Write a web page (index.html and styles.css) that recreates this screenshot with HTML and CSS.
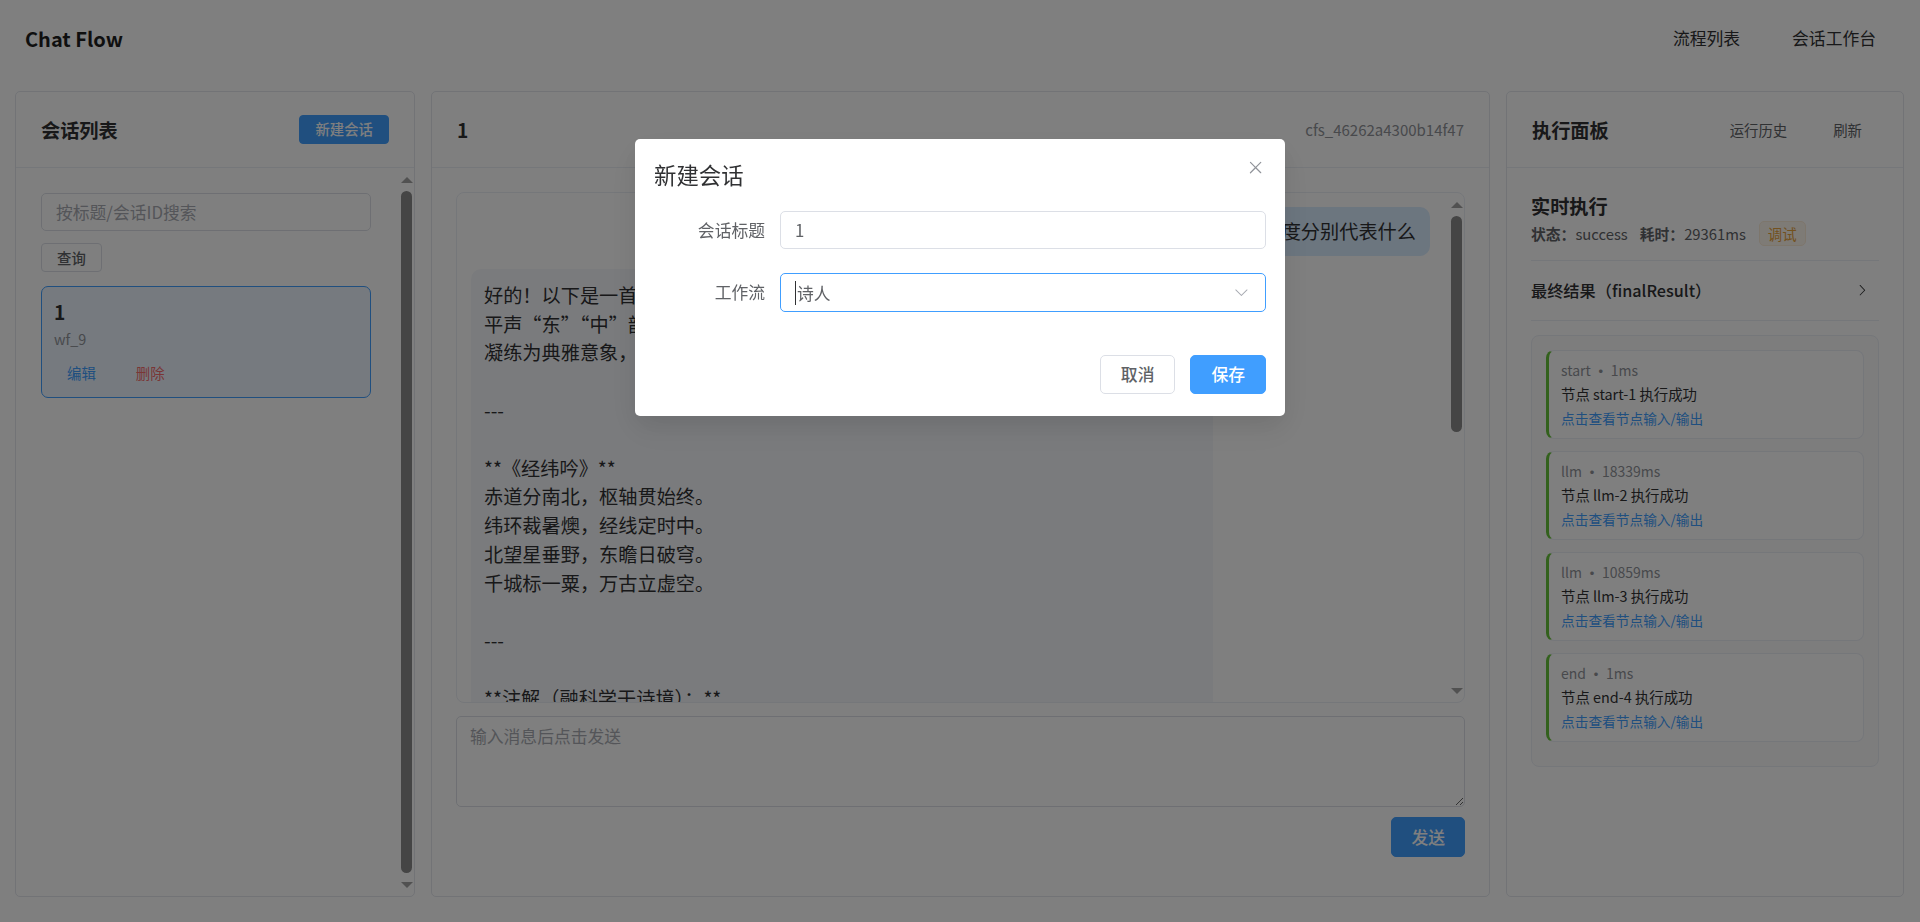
FILE: index.html
```html
<!DOCTYPE html>
<html lang="zh-CN">
<head>
    <meta charset="UTF-8">
    <meta name="viewport" content="width=device-width, initial-scale=1.0">
    <title>Chat Flow - 会话工作台</title>
    <link rel="stylesheet" href="styles.css">
</head>
<body>
    <header class="topbar">
        <div class="brand">Chat Flow</div>
        <nav class="nav">
            <a class="nav-item" href="#">流程列表</a>
            <a class="nav-item" href="#">会话工作台</a>
        </nav>
    </header>

    <main class="workspace">
        <!-- 会话列表 -->
        <section class="panel">
            <div class="panel-header">
                <span class="panel-title">会话列表</span>
                <button class="btn btn-primary btn-small">新建会话</button>
            </div>
            <div class="panel-body scroll-wrap">
                <div class="session-scroll">
                    <input class="input" type="text" placeholder="按标题/会话ID搜索">
                    <button class="btn btn-small btn-query">查询</button>
                    <div class="session-item active">
                        <div class="session-title">1</div>
                        <div class="session-sub">wf_9</div>
                        <div class="session-actions">
                            <button class="btn-text primary">编辑</button>
                            <button class="btn-text danger">删除</button>
                        </div>
                    </div>
                </div>
                <div class="scrollbar">
                    <div class="sb-btn up"><span class="arrow-up"></span></div>
                    <div class="sb-track"><div class="sb-thumb sb-thumb-full"></div></div>
                    <div class="sb-btn down"><span class="arrow-down"></span></div>
                </div>
            </div>
        </section>

        <!-- 会话窗口 -->
        <section class="panel">
            <div class="panel-header">
                <span class="panel-title">1</span>
                <span class="session-id">cfs_46262a4300b14f47</span>
            </div>
            <div class="panel-body chat-body">
                <div class="chat-box">
                    <div class="chat-scroll">
                        <div class="msg user">
                            <div class="bubble">请写一首关于经纬度的诗，并解释纬度和经度分别代表什么</div>
                        </div>
                        <div class="msg assistant">
                            <div class="bubble">好的！以下是一首以经纬度为主题的五言律诗，全诗押上
平声“东”“中”韵，把赤道、子午线、南北纬度与东西经度
凝练为典雅意象，兼顾科学知识与古典诗意。

---

**《经纬吟》**
赤道分南北，枢轴贯始终。
纬环裁暑燠，经线定时中。
北望星垂野，东瞻日破穹。
千城标一粟，万古立虚空。

---

**注解（融科学于诗境）：**
1. **赤道分南北**：赤道是纬度的起点（0°），分出南北半球。
2. **枢轴贯始终**：地轴贯穿南北两极，所有经线汇于两极。
3. **纬环裁暑燠**：纬线是平行于赤道的圆环，决定冷暖分布。
4. **经线定时中**：经度每相差15°，地方时便相差1小时。

希望这首诗能帮助你理解纬度和经度的含义！</div>
                        </div>
                    </div>
                    <div class="scrollbar">
                        <div class="sb-btn up"><span class="arrow-up"></span></div>
                        <div class="sb-track"><div class="sb-thumb sb-thumb-chat"></div></div>
                        <div class="sb-btn down"><span class="arrow-down"></span></div>
                    </div>
                </div>
                <textarea class="chat-input" placeholder="输入消息后点击发送"></textarea>
                <div class="chat-actions">
                    <button class="btn btn-primary btn-send">发送</button>
                </div>
            </div>
        </section>

        <!-- 执行面板 -->
        <section class="panel">
            <div class="panel-header">
                <span class="panel-title">执行面板</span>
                <div class="header-links">
                    <button class="btn-link">运行历史</button>
                    <button class="btn-link">刷新</button>
                </div>
            </div>
            <div class="panel-body exec-body">
                <div class="exec-title">实时执行</div>
                <div class="exec-meta">
                    <span class="meta-item"><b>状态：</b>success</span>
                    <span class="meta-item"><b>耗时：</b>29361ms</span>
                    <span class="tag tag-warning">调试</span>
                </div>

                <div class="collapse">
                    <div class="collapse-head">
                        <span>最终结果（finalResult）</span>
                        <svg class="collapse-arrow" viewBox="0 0 1024 1024"><path d="M340.864 149.312a30.592 30.592 0 0 0 0 42.752L652.736 512 340.864 831.872a30.592 30.592 0 0 0 0 42.752 29.12 29.12 0 0 0 41.728 0L714.24 534.336a32 32 0 0 0 0-44.672L382.592 149.376a29.12 29.12 0 0 0-41.728 0z"/></svg>
                    </div>
                </div>

                <div class="steps">
                    <div class="step">
                        <div class="step-meta">start<span class="dot">·</span>1ms</div>
                        <div class="step-title">节点 start-1 执行成功</div>
                        <a class="step-link" href="#">点击查看节点输入/输出</a>
                    </div>
                    <div class="step">
                        <div class="step-meta">llm<span class="dot">·</span>18339ms</div>
                        <div class="step-title">节点 llm-2 执行成功</div>
                        <a class="step-link" href="#">点击查看节点输入/输出</a>
                    </div>
                    <div class="step">
                        <div class="step-meta">llm<span class="dot">·</span>10859ms</div>
                        <div class="step-title">节点 llm-3 执行成功</div>
                        <a class="step-link" href="#">点击查看节点输入/输出</a>
                    </div>
                    <div class="step">
                        <div class="step-meta">end<span class="dot">·</span>1ms</div>
                        <div class="step-title">节点 end-4 执行成功</div>
                        <a class="step-link" href="#">点击查看节点输入/输出</a>
                    </div>
                </div>
            </div>
        </section>
    </main>

    <!-- 新建会话弹窗 -->
    <div class="overlay">
        <div class="dialog">
            <div class="dialog-header">
                <span class="dialog-title">新建会话</span>
                <button class="dialog-close">
                    <svg viewBox="0 0 1024 1024"><path d="M764.288 214.592 512 466.88 259.712 214.592a31.936 31.936 0 0 0-45.12 45.12L466.752 512 214.528 764.224a31.936 31.936 0 1 0 45.12 45.184L512 557.184l252.288 252.288a31.936 31.936 0 0 0 45.12-45.12L557.12 512.064l252.288-252.352a31.936 31.936 0 1 0-45.12-45.184z"/></svg>
                </button>
            </div>
            <div class="dialog-body">
                <div class="form-item">
                    <label class="form-label">会话标题</label>
                    <input class="field" type="text" value="1">
                </div>
                <div class="form-item">
                    <label class="form-label">工作流</label>
                    <div class="field select focus">
                        <span class="caret"></span><span>诗人</span>
                        <svg class="select-arrow" viewBox="0 0 1024 1024"><path d="M831.872 340.864 512 652.672 192.128 340.864a30.592 30.592 0 0 0-42.752 0 29.12 29.12 0 0 0 0 41.6L489.664 714.24a32 32 0 0 0 44.672 0l340.288-331.712a29.12 29.12 0 0 0 0-41.728 30.592 30.592 0 0 0-42.752 0z"/></svg>
                    </div>
                </div>
            </div>
            <div class="dialog-footer">
                <button class="btn btn-dialog">取消</button>
                <button class="btn btn-primary btn-dialog">保存</button>
            </div>
        </div>
    </div>
</body>
</html>
```

FILE: styles.css
```css
* {
    box-sizing: border-box;
}
html, body {
    height: 100%;
}
body {
    margin: 0;
    font-family: "Noto Sans CJK SC", "Noto Sans", sans-serif;
    font-size: 16.8px;
    color: #303133;
    background: #fff;
    overflow: hidden;
}
button, input, textarea {
    font-family: inherit;
    font-size: inherit;
}
a {
    text-decoration: none;
    color: inherit;
}

/* 顶部导航 */
.topbar {
    height: 77px;
    display: flex;
    align-items: center;
    justify-content: space-between;
    padding: 0 18px 0 25px;
}
.brand {
    font-size: 20px;
    font-weight: 700;
    color: #1f1f1f;
}
.nav {
    display: flex;
}
.nav-item {
    padding: 0 26px;
    line-height: 77px;
    color: #303133;
}

/* 三栏布局 */
.workspace {
    height: calc(100% - 77px);
    display: grid;
    grid-template-columns: 400px 1fr 398px;
    gap: 16px;
    padding: 14px 16px 25px 15px;
}
.panel {
    display: flex;
    flex-direction: column;
    min-height: 0;
    border: 1px solid #e4e7ed;
    border-radius: 5px;
    background: #fff;
    overflow: hidden;
}
.panel-header {
    flex: none;
    height: 76px;
    display: flex;
    align-items: center;
    justify-content: space-between;
    padding: 0 25px;
    border-bottom: 1px solid #ebeef5;
}
.panel-title {
    font-size: 19.2px;
    font-weight: 700;
    color: #303133;
}
.panel-body {
    flex: 1;
    min-height: 0;
}

/* 滚动条 */
.scrollbar {
    flex: none;
    width: 15px;
    display: flex;
    flex-direction: column;
}
.sb-btn {
    flex: none;
    height: 20px;
    display: flex;
    justify-content: center;
}
.sb-btn.up {
    align-items: flex-end;
    padding-bottom: 5px;
}
.sb-btn.down {
    align-items: flex-start;
    padding-top: 6px;
}
.arrow-up {
    border-left: 6px solid transparent;
    border-right: 6px solid transparent;
    border-bottom: 6px solid #a3a3a3;
}
.arrow-down {
    border-left: 6px solid transparent;
    border-right: 6px solid transparent;
    border-top: 6px solid #a3a3a3;
}
.sb-track {
    flex: 1;
    padding: 3px 2px;
}
.sb-thumb {
    background: #8a8a8a;
    border-radius: 6px;
}
.sb-thumb-full {
    height: 100%;
}
.sb-thumb-chat {
    height: 216px;
}

/* 按钮 */
.btn {
    display: inline-flex;
    align-items: center;
    justify-content: center;
    height: 38.4px;
    padding: 0 18px;
    border: 1px solid #dcdfe6;
    border-radius: 5px;
    background: #fff;
    color: #606266;
    font-weight: 500;
    line-height: 1;
    cursor: pointer;
}
.btn-primary {
    background: #409eff;
    border-color: #409eff;
    color: #fff;
}
.btn-small {
    height: 29px;
    padding: 0 15px;
    font-size: 14.4px;
    border-radius: 4px;
}
.btn-text {
    height: 29px;
    padding: 0 13px;
    border: 0;
    background: none;
    font-size: 14.4px;
    cursor: pointer;
}
.btn-text + .btn-text {
    margin-left: 14px;
}
.btn-text.primary {
    color: #409eff;
}
.btn-text.danger {
    color: #f56c6c;
}
.btn-link {
    height: 29px;
    padding: 0 16px;
    border: 0;
    background: none;
    font-size: 14.4px;
    color: #606266;
    cursor: pointer;
}
.btn-link + .btn-link {
    margin-left: 14px;
}
.header-links {
    display: flex;
}

/* 会话列表 */
.scroll-wrap {
    display: flex;
}
.session-scroll {
    flex: 1;
    min-width: 0;
    padding: 25px 28px 0 25px;
    overflow: hidden;
}
.input {
    display: block;
    width: 100%;
    height: 38.4px;
    padding: 0 14px;
    border: 1px solid #dcdfe6;
    border-radius: 5px;
    color: #606266;
    outline: none;
}
.input::placeholder {
    color: #a8abb2;
}
.btn-query {
    margin-top: 12px;
}
.session-item {
    margin-top: 14px;
    padding: 12px 12px 10px;
    border: 1px solid #dcdfe6;
    border-radius: 7px;
}
.session-item.active {
    border-color: #409eff;
    background: #ecf5ff;
}
.session-title {
    font-size: 19.2px;
    font-weight: 700;
    line-height: 27px;
}
.session-sub {
    margin-top: 2px;
    font-size: 14.4px;
    line-height: 21.6px;
    color: #909399;
}
.session-actions {
    margin-top: 8px;
    display: flex;
}

/* 聊天区 */
.session-id {
    font-size: 15px;
    color: #909399;
}
.chat-body {
    display: flex;
    flex-direction: column;
    padding: 24px 24px 39px;
}
.chat-box {
    flex: 1;
    min-height: 0;
    display: flex;
    border: 1px solid #ebeef5;
    border-radius: 8px;
    overflow: hidden;
}
.chat-scroll {
    flex: 1;
    min-width: 0;
    padding: 14px;
    overflow: hidden;
}
.msg {
    display: flex;
}
.msg + .msg {
    margin-top: 13px;
}
.msg.user {
    justify-content: flex-end;
    padding-right: 5px;
}
.bubble {
    font-size: 19.2px;
    line-height: 28.8px;
    white-space: pre-wrap;
    border-radius: 10px;
    color: #303133;
}
.msg.user .bubble {
    max-width: 77%;
    padding: 10px 14px;
    background: #d9ecff;
}
.msg.assistant .bubble {
    width: 77%;
    padding: 12px 13px;
    background: #f5f7fa;
}
.chat-input {
    flex: none;
    display: block;
    height: 91px;
    margin-top: 13px;
    padding: 7px 13px;
    border: 1px solid #dcdfe6;
    border-radius: 5px;
    line-height: 1.5;
    color: #606266;
    resize: vertical;
    outline: none;
}
.chat-input::placeholder {
    color: #a8abb2;
}
.chat-actions {
    flex: none;
    display: flex;
    justify-content: flex-end;
    margin-top: 10px;
}
.btn-send {
    height: 40px;
    padding: 0 19px;
}

/* 执行面板 */
.exec-body {
    padding: 24px;
    overflow: hidden;
}
.exec-title {
    font-size: 19.2px;
    font-weight: 700;
    line-height: 28.8px;
}
.exec-meta {
    display: flex;
    align-items: center;
    font-size: 14.8px;
    color: #606266;
}
.meta-item {
    margin-right: 12px;
}
.meta-item + .meta-item {
    margin-right: 13px;
}
.tag {
    display: inline-flex;
    align-items: center;
    height: 25px;
    padding: 0 8px;
    border-radius: 5px;
    font-size: 14.4px;
}
.tag-warning {
    background: #fdf6ec;
    border: 1px solid #faecd8;
    color: #e6a23c;
}
.collapse {
    margin-top: 14px;
    border-top: 1px solid #ebeef5;
    border-bottom: 1px solid #ebeef5;
}
.collapse-head {
    height: 59px;
    display: flex;
    align-items: center;
    font-size: 16.2px;
    font-weight: 500;
    color: #303133;
}
.collapse-arrow {
    width: 14.4px;
    height: 14.4px;
    margin: 0 10px 0 auto;
    fill: #303133;
}
.steps {
    margin-top: 14px;
    padding: 14px 14px 12px;
    border: 1px solid #ebeef5;
    border-radius: 8px;
    background: #fafafa;
}
.step {
    margin-bottom: 12px;
    padding: 8px 12px 8px;
    background: #fff;
    border: 1px solid #ebeef5;
    border-left: 3px solid #67c23a;
    border-radius: 8px;
}
.step-meta {
    font-size: 14px;
    line-height: 22px;
    color: #909399;
}
.step-meta .dot {
    margin: 0 3px;
    font-weight: 700;
}
.step-title {
    font-size: 14.4px;
    line-height: 25px;
    color: #303133;
}
.step-link {
    display: block;
    font-size: 13.7px;
    line-height: 24px;
    color: #409eff;
}

/* 弹窗 */
.overlay {
    position: fixed;
    inset: 0;
    background: rgba(0, 0, 0, 0.5);
}
.dialog {
    position: relative;
    width: 650px;
    margin: 139px auto 0;
    padding: 19px 19px 22px;
    background: #fff;
    border-radius: 5px;
    box-shadow: 0 14px 38px 5px rgba(0, 0, 0, 0.04), 0 10px 24px rgba(0, 0, 0, 0.08);
}
.dialog-header {
    padding-bottom: 21px;
}
.dialog-title {
    font-size: 22.4px;
    line-height: 32px;
    color: #303133;
}
.dialog-close {
    position: absolute;
    top: 0;
    right: 0;
    width: 58px;
    height: 58px;
    padding: 0;
    border: 0;
    background: none;
    display: flex;
    align-items: center;
    justify-content: center;
}
.dialog-close svg {
    width: 19.2px;
    height: 19.2px;
    fill: #909399;
}
.form-item {
    display: flex;
    margin-bottom: 24px;
}
.form-label {
    flex: none;
    width: 126px;
    padding-right: 15px;
    line-height: 38.4px;
    text-align: right;
    color: #606266;
}
.field {
    flex: 1;
    min-width: 0;
    height: 38.4px;
    padding: 0 14px;
    border: 1px solid #dcdfe6;
    border-radius: 5px;
    color: #606266;
    outline: none;
}
.select {
    display: flex;
    align-items: center;
    padding-right: 15px;
}
.select.focus {
    border-color: #409eff;
}
.caret {
    display: inline-block;
    height: 24px;
    margin-right: 1px;
    border-left: 1px solid #303133;
}
.select-arrow {
    width: 16.8px;
    height: 16.8px;
    margin-left: auto;
    fill: #a8abb2;
}
.dialog-footer {
    display: flex;
    justify-content: flex-end;
    gap: 15px;
    padding-top: 19px;
}
.btn-dialog {
    height: 39px;
    padding: 0 20px;
}
```
